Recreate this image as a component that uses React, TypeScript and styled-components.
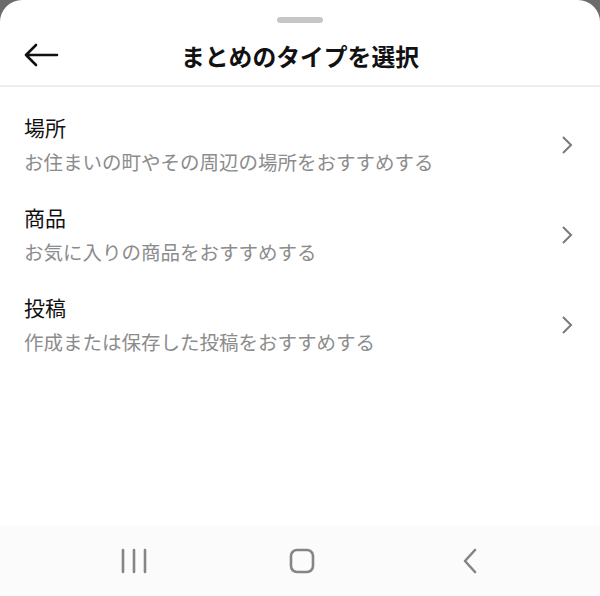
import styled, { createGlobalStyle } from "styled-components";

const GlobalStyle = createGlobalStyle`
  html, body {
    margin: 0;
    padding: 0;
    background: #6b6b6b;
  }
  body {
    font-family: "Noto Sans CJK JP", "Noto Sans", sans-serif;
  }
`;

const Screen = styled.div`
  width: 600px;
  height: 596px;
  display: flex;
  flex-direction: column;
  overflow: hidden;
`;

const Sheet = styled.div`
  flex: 1;
  display: flex;
  flex-direction: column;
  background: #ffffff;
  border-radius: 22px 22px 0 0;
`;

const HandleBar = styled.div`
  display: flex;
  justify-content: center;
  padding-top: 17px;
`;

const Handle = styled.div`
  width: 46px;
  height: 6px;
  border-radius: 3px;
  background: #c6c6c6;
`;

const Header = styled.header`
  height: 62px;
  display: grid;
  grid-template-columns: 80px 1fr 80px;
  align-items: center;
  border-bottom: 2px solid #eeeeee;
  box-sizing: border-box;
  margin-top: 2px;
`;

const BackButton = styled.button`
  border: 0;
  background: none;
  padding: 0 0 0 23px;
  display: flex;
  align-items: center;
  height: 100%;
`;

const Title = styled.h1`
  margin: 0;
  text-align: center;
  font-size: 23.8px;
  font-weight: 700;
  color: #111111;
`;

const List = styled.ul`
  list-style: none;
  margin: 0;
  padding: 0;
`;

const Row = styled.li`
  display: flex;
  align-items: center;
  padding: 26px 26px 1px 24px;
  height: 90px;
  box-sizing: border-box;
`;

const RowText = styled.div`
  flex: 1;
  display: flex;
  flex-direction: column;
  gap: 7px;
`;

const RowTitle = styled.span`
  font-size: 21px;
  line-height: 28px;
  color: #111111;
`;

const RowSub = styled.span`
  font-size: 19.5px;
  line-height: 28px;
  color: #8c8c8c;
`;

const Spacer = styled.div`
  flex: 1;
`;

const NavBar = styled.nav`
  height: 71px;
  background: #fbfbfb;
  display: grid;
  grid-template-columns: repeat(3, 168px);
  align-items: center;
  justify-items: center;
  padding-left: 50px;
`;

const NavIcon = styled.svg`
  display: block;
`;

function Chevron() {
  return (
    <svg width="14" height="20" viewBox="0 0 14 20">
      <path d="M3 2 L11 10 L3 18" fill="none" stroke="#7a7a7a" strokeWidth="2" />
    </svg>
  );
}

const items = [
  { title: "場所", sub: "お住まいの町やその周辺の場所をおすすめする" },
  { title: "商品", sub: "お気に入りの商品をおすすめする" },
  { title: "投稿", sub: "作成または保存した投稿をおすすめする" },
];

export default function App() {
  return (
    <Screen>
      <GlobalStyle />
      <Sheet>
        <HandleBar>
          <Handle />
        </HandleBar>
        <Header>
          <BackButton aria-label="戻る">
            <svg width="36" height="24" viewBox="0 0 36 24">
              <path
                d="M34 12 H3 M13 2 L3 12 L13 22"
                fill="none"
                stroke="#111"
                strokeWidth="2.6"
                strokeLinecap="round"
                strokeLinejoin="round"
              />
            </svg>
          </BackButton>
          <Title>まとめのタイプを選択</Title>
          <div />
        </Header>
        <List>
          {items.map((it) => (
            <Row key={it.title}>
              <RowText>
                <RowTitle>{it.title}</RowTitle>
                <RowSub>{it.sub}</RowSub>
              </RowText>
              <Chevron />
            </Row>
          ))}
        </List>
        <Spacer />
        <NavBar>
          <NavIcon width="26" height="26" viewBox="0 0 26 26">
            <path d="M2 2 V24 M13 2 V24 M24 2 V24" stroke="#858585" strokeWidth="2.6" strokeLinecap="round" />
          </NavIcon>
          <NavIcon width="26" height="26" viewBox="0 0 26 26">
            <rect x="2" y="2" width="22" height="22" rx="6" fill="none" stroke="#858585" strokeWidth="2.6" />
          </NavIcon>
          <NavIcon width="16" height="26" viewBox="0 0 16 26">
            <path d="M13 2 L3 13 L13 24" fill="none" stroke="#858585" strokeWidth="2.6" strokeLinecap="round" strokeLinejoin="round" />
          </NavIcon>
        </NavBar>
      </Sheet>
    </Screen>
  );
}
